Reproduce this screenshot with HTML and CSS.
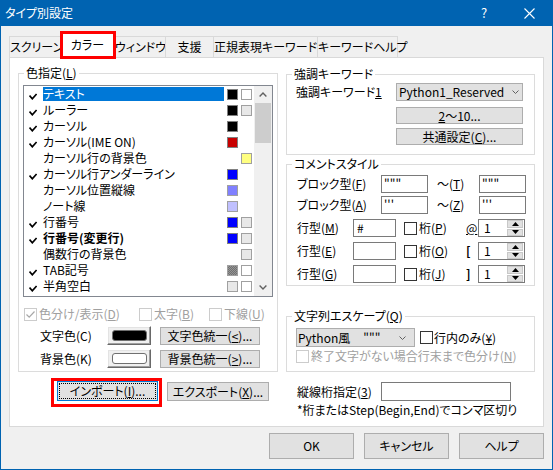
FILE: index.html
```html
<!DOCTYPE html>
<html lang="ja">
<head>
<meta charset="utf-8">
<title>タイプ別設定</title>
<link rel="stylesheet" href="styles.css">
</head>
<body>
<div class="window">
  <div class="titlebar">
    <span class="title">タイプ別設定</span>
    <span class="tb-help">?</span>
    <svg class="tb-close" width="11" height="11" viewBox="0 0 11 11"><path d="M0.5 0.5 L10.5 10.5 M10.5 0.5 L0.5 10.5" stroke="#fff" stroke-width="1.1" fill="none"/></svg>
  </div>
  <div class="main">
    <div class="tabs">
      <div class="tab w1">スクリーン</div>
      <div class="tab tab-sel w2">カラー</div>
      <div class="tab w3">ウィンドウ</div>
      <div class="tab w4">支援</div>
      <div class="tab w5">正規表現キーワード</div>
      <div class="tab w6">キーワードヘルプ</div>
    </div>
    <div class="panel">
      <div class="col-left">
        <fieldset class="grp grp-color">
          <legend>色指定(<u>L</u>)</legend>
          <div class="listbox">
            <div class="rows">
              <div class="row"><span class="chk"><svg width="8" height="7" viewBox="0 0 8 7"><path d="M0.5 2.5 L3.3 5.8 L7.6 1" fill="none" stroke="#000" stroke-width="1.7"/></svg></span><span class="name sel">テキスト</span><span class="sw k"></span><span class="sw w"></span></div>
              <div class="row"><span class="chk"><svg width="8" height="7" viewBox="0 0 8 7"><path d="M0.5 2.5 L3.3 5.8 L7.6 1" fill="none" stroke="#000" stroke-width="1.7"/></svg></span><span class="name">ルーラー</span><span class="sw k"></span><span class="sw lg"></span></div>
              <div class="row"><span class="chk"><svg width="8" height="7" viewBox="0 0 8 7"><path d="M0.5 2.5 L3.3 5.8 L7.6 1" fill="none" stroke="#000" stroke-width="1.7"/></svg></span><span class="name">カーソル</span><span class="sw k"></span><span class="sw none"></span></div>
              <div class="row"><span class="chk"><svg width="8" height="7" viewBox="0 0 8 7"><path d="M0.5 2.5 L3.3 5.8 L7.6 1" fill="none" stroke="#000" stroke-width="1.7"/></svg></span><span class="name">カーソル(IME ON)</span><span class="sw r"></span><span class="sw none"></span></div>
              <div class="row"><span class="chk"></span><span class="name">カーソル行の背景色</span><span class="sw none"></span><span class="sw y"></span></div>
              <div class="row"><span class="chk"><svg width="8" height="7" viewBox="0 0 8 7"><path d="M0.5 2.5 L3.3 5.8 L7.6 1" fill="none" stroke="#000" stroke-width="1.7"/></svg></span><span class="name">カーソル行アンダーライン</span><span class="sw b"></span><span class="sw none"></span></div>
              <div class="row"><span class="chk"></span><span class="name">カーソル位置縦線</span><span class="sw b2"></span><span class="sw none"></span></div>
              <div class="row"><span class="chk"></span><span class="name">ノート線</span><span class="sw b3"></span><span class="sw none"></span></div>
              <div class="row"><span class="chk"><svg width="8" height="7" viewBox="0 0 8 7"><path d="M0.5 2.5 L3.3 5.8 L7.6 1" fill="none" stroke="#000" stroke-width="1.7"/></svg></span><span class="name">行番号</span><span class="sw b"></span><span class="sw lg"></span></div>
              <div class="row"><span class="chk"><svg width="8" height="7" viewBox="0 0 8 7"><path d="M0.5 2.5 L3.3 5.8 L7.6 1" fill="none" stroke="#000" stroke-width="1.7"/></svg></span><span class="name bold">行番号(変更行)</span><span class="sw b"></span><span class="sw lg"></span></div>
              <div class="row"><span class="chk"></span><span class="name">偶数行の背景色</span><span class="sw none"></span><span class="sw lg"></span></div>
              <div class="row"><span class="chk"><svg width="8" height="7" viewBox="0 0 8 7"><path d="M0.5 2.5 L3.3 5.8 L7.6 1" fill="none" stroke="#000" stroke-width="1.7"/></svg></span><span class="name">TAB記号</span><span class="sw g"></span><span class="sw w"></span></div>
              <div class="row"><span class="chk"><svg width="8" height="7" viewBox="0 0 8 7"><path d="M0.5 2.5 L3.3 5.8 L7.6 1" fill="none" stroke="#000" stroke-width="1.7"/></svg></span><span class="name">半角空白</span><span class="sw lg"></span><span class="sw w"></span></div>
            </div>
            <div class="vscroll">
              <div class="sb-btn"><svg width="8" height="5" viewBox="0 0 8 5"><path d="M0.6 4.4 L4 1 L7.4 4.4" fill="none" stroke="#606060" stroke-width="1.4"/></svg></div>
              <div class="sb-thumb"></div>
              <div class="sb-track"></div>
              <div class="sb-btn"><svg width="8" height="5" viewBox="0 0 8 5"><path d="M0.6 0.6 L4 4 L7.4 0.6" fill="none" stroke="#606060" stroke-width="1.4"/></svg></div>
            </div>
          </div>
          <div class="opts">
            <label class="cbl opt1 dis"><span class="cb dis"><svg width="11" height="11" viewBox="0 0 11 11"><path d="M1.5 5.5 L4.2 8.2 L9.5 2.5" fill="none" stroke="#a8a8a8" stroke-width="1.2"/></svg></span>色分け/表示(<u>D</u>)</label>
            <label class="cbl opt2 dis"><span class="cb dis"></span>太字(<u>B</u>)</label>
            <label class="cbl dis"><span class="cb dis"></span>下線(<u>U</u>)</label>
          </div>
          <div class="colrow">
            <span class="lbl">文字色(C)</span>
            <span class="colbtn"><span class="colsw k"></span></span>
            <button class="btn btn-uni">文字色統一(<u>&lt;</u>)...</button>
          </div>
          <div class="colrow">
            <span class="lbl">背景色(K)</span>
            <span class="colbtn"><span class="colsw w"></span></span>
            <button class="btn btn-uni">背景色統一(<u>&gt;</u>)...</button>
          </div>
        </fieldset>
        <div class="iorow">
          <button class="btn btn-imp"><span class="focus">インポート(<u>I</u>)...</span></button>
          <button class="btn btn-exp">エクスポート(<u>X</u>)...</button>
        </div>
      </div>
      <div class="col-right">
        <fieldset class="grp grp-kw">
          <legend>強調キーワード</legend>
          <div class="kw-row">
            <span class="kw-label">強調キーワード<u>1</u></span>
            <div class="combo kw-combo"><span>Python1_Reserved</span><svg class="chev" width="7" height="4" viewBox="0 0 7 4"><path d="M0.5 0.5 L3.5 3.5 L6.5 0.5" fill="none" stroke="#606060" stroke-width="1"/></svg></div>
          </div>
          <button class="btn kw-btn"><u>2</u>〜10...</button>
          <button class="btn kw-btn kw-btn2">共通設定(<u>C</u>)...</button>
        </fieldset>
        <fieldset class="grp grp-cmt">
          <legend>コメントスタイル</legend>
          <div class="crow r1">
            <span class="clbl">ブロック型(<u>F</u>)</span>
            <span class="inp in-b">"""</span>
            <span class="tilde">〜(<u>T</u>)</span>
            <span class="inp in-b">"""</span>
          </div>
          <div class="crow r2">
            <span class="clbl">ブロック型(<u>A</u>)</span>
            <span class="inp in-b">'''</span>
            <span class="tilde">〜(<u>Z</u>)</span>
            <span class="inp in-b">'''</span>
          </div>
          <div class="crow r3">
            <span class="llbl">行型(<u>M</u>)</span>
            <span class="inp in-l">#</span>
            <span class="cb"></span>
            <span class="digit">桁(<u>P</u>)</span>
            <span class="mark"><u>@</u></span>
            <div class="spin"><span class="spin-v">1</span><span class="spin-btns"><span class="sp"><svg width="7" height="4" viewBox="0 0 7 4"><path d="M0 4 L3.5 0 L7 4 Z" fill="#000"/></svg></span><span class="sp"><svg width="7" height="4" viewBox="0 0 7 4"><path d="M0 0 L3.5 4 L7 0 Z" fill="#000"/></svg></span></span></div>
          </div>
          <div class="crow r4">
            <span class="llbl">行型(<u>E</u>)</span>
            <span class="inp in-l"></span>
            <span class="cb"></span>
            <span class="digit">桁(<u>O</u>)</span>
            <span class="mark brk">[</span>
            <div class="spin"><span class="spin-v">1</span><span class="spin-btns"><span class="sp"><svg width="7" height="4" viewBox="0 0 7 4"><path d="M0 4 L3.5 0 L7 4 Z" fill="#000"/></svg></span><span class="sp"><svg width="7" height="4" viewBox="0 0 7 4"><path d="M0 0 L3.5 4 L7 0 Z" fill="#000"/></svg></span></span></div>
          </div>
          <div class="crow r5">
            <span class="llbl">行型(<u>G</u>)</span>
            <span class="inp in-l"></span>
            <span class="cb"></span>
            <span class="digit">桁(<u>J</u>)</span>
            <span class="mark brk">]</span>
            <div class="spin"><span class="spin-v">1</span><span class="spin-btns"><span class="sp"><svg width="7" height="4" viewBox="0 0 7 4"><path d="M0 4 L3.5 0 L7 4 Z" fill="#000"/></svg></span><span class="sp"><svg width="7" height="4" viewBox="0 0 7 4"><path d="M0 0 L3.5 4 L7 0 Z" fill="#000"/></svg></span></span></div>
          </div>
        </fieldset>
        <fieldset class="grp grp-esc">
          <legend>文字列エスケープ(<u>Q</u>)</legend>
          <div class="esc-row">
            <div class="combo esc-combo"><span>Python風</span><span class="q">"""</span><svg class="chev" width="7" height="4" viewBox="0 0 7 4"><path d="M0.5 0.5 L3.5 3.5 L6.5 0.5" fill="none" stroke="#606060" stroke-width="1"/></svg></div>
            <label class="cbl esc-cb"><span class="cb"></span>行内のみ(<u>¥</u>)</label>
          </div>
          <label class="cbl dis esc-row2"><span class="cb dis"></span>終了文字がない場合行末まで色分け(<u>N</u>)</label>
        </fieldset>
        <div class="vrow">
          <span class="vlbl">縦線桁指定(<u>3</u>)</span>
          <span class="inp vin"></span>
        </div>
        <div class="note">*桁またはStep(Begin,End)でコンマ区切り</div>
      </div>
    </div>
  </div>
  <div class="footer">
    <button class="btn btn-f">OK</button>
    <button class="btn btn-f">キャンセル</button>
    <button class="btn btn-f">ヘルプ</button>
  </div>
  <div class="hl hl-tab"></div>
  <div class="hl hl-imp"></div>
</div>
</body>
</html>
```
FILE: styles.css
```css
* { box-sizing: border-box; }
html, body { margin: 0; padding: 0; background: #f0f0f0; }
body {
  font-family: "Noto Sans CJK JP", "Noto Sans", sans-serif;
  font-size: 12px;
  line-height: 16px;
  color: #000;
  font-feature-settings: "palt" 1;
}
u { text-decoration: underline; text-underline-offset: 1px; }

.window {
  position: relative;
  width: 553px;
  height: 470px;
  background: #f0f0f0;
  box-shadow: inset 0 0 0 1px #0063b1;
  overflow: hidden;
}

/* title bar */
.titlebar {
  height: 26px;
  background: #0063b1;
  color: #fff;
  display: flex;
  align-items: center;
  padding-left: 5px;
}
.title { flex: 1; }
.tb-help { width: 12px; text-align: center; font-size: 13px; }
.tb-close { margin-left: 34px; margin-right: 18px; display: block; }

/* tabs */
.main { padding: 7px 0 0 9px; }
.tabs { display: flex; align-items: flex-end; height: 24px; }
.tab {
  height: 21px;
  border: 1px solid #d9d9d9;
  border-bottom: none;
  border-right: none;
  background: #f0f0f0;
  text-align: center;
  line-height: 19px;
  white-space: nowrap;
}
.tab:last-child { border-right: 1px solid #d9d9d9; }
.tab-sel {
  height: 25px;
  margin-bottom: -1px;
  background: #fff;
  position: relative;
  z-index: 1;
  border-right: 1px solid #d9d9d9;
  line-height: 21px;
}
.tab-sel + .tab { border-left: none; }
.w1 { width: 51px; }
.w2 { width: 55px; }
.w3 { width: 50px; }
.w4 { width: 48px; }
.w5 { width: 104px; }
.w6 { width: 81px; }

/* panel */
.panel {
  width: 535px;
  height: 370px;
  background: #fff;
  border: 1px solid #d9d9d9;
  display: flex;
  gap: 8px;
  padding: 7px 0 0 8px;
}
.col-left { width: 260px; }
.col-right { width: 249px; }

.grp {
  margin: 0;
  padding: 0;
  border: 1px solid #dcdcdc;
  min-width: 0;
}
.grp legend {
  padding: 0 2px;
  margin-left: 5px;
  line-height: 16px;
}
.grp-color { padding-bottom: 3px; }

/* list box */
.listbox {
  margin: 4px 0 0 4px;
  width: 250px;
  height: 212px;
  border: 1px solid #828790;
  display: flex;
  background: #fff;
}
.rows { width: 230px; }
.row { height: 16px; display: flex; align-items: center; }
.chk { width: 19px; height: 16px; align-self: flex-start; flex: none; }
.chk svg { display: block; margin: 7px 0 0 5px; }
.name {
  width: 181px;
  height: 14px;
  line-height: 14px;
  white-space: nowrap;
  flex: none;
}
.name.sel { background: #0078d7; color: #fff; }
.name.bold { font-weight: bold; }
.sw {
  width: 11px;
  height: 11px;
  margin-left: 3px;
  border: 1px solid #a0a0a0;
  flex: none;
  margin-top: 1px;
}
.sw.none { border-color: transparent; }
.k { background: #000; border-color: #808080; }
.w { background: #fff; }
.lg { background: #e8e8e8; }
.r { background: #c80000; border-color: #808080; }
.y { background: #ffff80; }
.b { background: #0000ff; border-color: #808080; }
.b2 { background: #8080ff; }
.b3 { background: #c0c0ff; }
.g { background: repeating-conic-gradient(#707070 0 25%, #959595 0 50%) 0 0 / 2px 2px; }

.vscroll {
  width: 18px;
  display: flex;
  flex-direction: column;
  background: #f0f0f0;
}
.sb-btn { height: 17px; display: flex; align-items: center; justify-content: center; }
.sb-thumb { height: 40px; margin: 0 1px; background: #cdcdcd; }
.sb-track { flex: 1; }

/* checkboxes */
.cb {
  width: 13px;
  height: 13px;
  border: 1px solid #333;
  background: #fff;
  display: inline-flex;
  align-items: center;
  justify-content: center;
  flex: none;
}
.cb.dis { border-color: #cccccc; }
.cbl { display: flex; align-items: center; white-space: nowrap; }
.cbl .cb { margin-right: 2px; }
.dis { color: #a0a0a0; }

.opts { display: flex; align-items: center; height: 16px; margin: 9px 0 0 5px; }
.opt1 { width: 115px; }
.opt2 { width: 70px; }

/* color rows */
.colrow { display: flex; align-items: center; height: 19px; margin: 4px 0 0 21px; }
.colrow .lbl { width: 67px; }
.colbtn {
  width: 44px;
  height: 19px;
  background: #f0f0f0;
  border: 1px solid;
  border-color: #fff #696969 #696969 #fff;
  box-shadow: inset -1px -1px 0 #a0a0a0, inset 1px 1px 0 #e3e3e3;
  display: flex;
  align-items: center;
  padding-left: 4px;
}
.colsw { width: 35px; height: 11px; border-radius: 3px; border: 1px solid #707070; }

/* buttons */
.btn {
  font: inherit;
  font-feature-settings: inherit;
  color: #000;
  background: #e1e1e1;
  border: 1px solid #adadad;
  padding: 0;
  margin: 0;
  display: flex;
  align-items: center;
  justify-content: center;
  line-height: 14px;
  white-space: nowrap;
}
.btn-uni { margin-left: 9px; width: 100px; height: 18px; }

.iorow { display: flex; margin-top: 9px; }
.btn-imp { margin-left: 39px; width: 101px; height: 20px; border-color: #0078d7; }
.btn-imp .focus {
  display: flex;
  align-items: center;
  justify-content: center;
  width: 95px;
  height: 14px;
  outline: 1px dotted #000;
}
.btn-exp { margin-left: 9px; width: 102px; height: 19px; margin-top: 1px; }

/* right column */
.grp-kw { margin-top: 1px; padding-bottom: 9px; }
.kw-row { display: flex; align-items: center; height: 18px; margin: 1px 0 0 9px; }
.kw-label { width: 100px; white-space: nowrap; }
.combo {
  display: flex;
  align-items: center;
  background: #e1e1e1;
  border: 1px solid #adadad;
  padding-left: 2px;
  white-space: nowrap;
}
.combo .chev { margin-left: auto; margin-right: 3px; display: block; }
.kw-combo { width: 127px; height: 18px; }
.kw-btn { margin: 6px 0 0 109px; width: 127px; height: 17px; }
.kw-btn2 { margin-top: 4px; }

.grp-cmt { margin-top: 1px; padding-bottom: 2px; }
.crow { display: flex; align-items: center; height: 18px; margin-left: 10px; }
.r1, .r2 { margin-top: 3px; }
.r3, .r4, .r5 { margin-top: 5px; }
.clbl { width: 84px; white-space: nowrap; }
.inp {
  height: 18px;
  border: 1px solid #7a7a7a;
  background: #fff;
  padding-left: 2px;
  line-height: 16px;
  white-space: nowrap;
  flex: none;
}
.in-b { width: 47px; }
.tilde { width: 51px; padding-left: 9px; white-space: nowrap; }
.llbl { width: 56px; white-space: nowrap; }
.in-l { width: 43px; padding-left: 3px; }
.crow .cb { margin-left: 8px; }
.digit { margin-left: 2px; width: 47px; white-space: nowrap; }
.mark { width: 12px; }
.brk { font-weight: bold; }
.spin {
  width: 47px;
  height: 18px;
  border: 1px solid #7a7a7a;
  background: #fff;
  display: flex;
}
.spin-v { flex: 1; padding-left: 5px; line-height: 16px; }
.spin-btns { width: 17px; display: flex; flex-direction: column; gap: 1px; padding: 0 1px 0 0; }
.sp {
  flex: 1;
  background: #e1e1e1;
  border: 1px solid #c8c8c8;
  display: flex;
  align-items: center;
  justify-content: center;
}
.sp svg { display: block; }

.grp-esc { margin-top: 22px; padding-bottom: 8px; }
.esc-row { display: flex; align-items: center; height: 19px; margin: 4px 0 0 9px; }
.esc-combo { width: 119px; height: 19px; padding-left: 1px; }
.esc-combo .q { margin-left: 13px; }
.esc-combo .chev { margin-right: 8px; }
.esc-cb { margin-left: 5px; }
.esc-cb .cb { margin-right: 1px; }
.esc-row2 { height: 14px; margin: 2px 0 0 9px; }

.vrow { display: flex; align-items: center; height: 19px; margin: 10px 0 0 11px; }
.vlbl { width: 84px; white-space: nowrap; }
.vin { width: 130px; height: 19px; }
.note { margin: 1px 0 0 11px; white-space: nowrap; }

/* footer */
.footer { display: flex; gap: 10px; padding-left: 269px; margin-top: 6px; }
.btn-f { width: 85px; height: 26px; }

/* annotation boxes */
.hl {
  position: absolute;
  border: 3px solid #ff0000;
  pointer-events: none;
  z-index: 5;
}
.hl-tab { left: 60px; top: 31px; width: 56px; height: 28px; }
.hl-imp { left: 51px; top: 378px; width: 111px; height: 29px; }
```
